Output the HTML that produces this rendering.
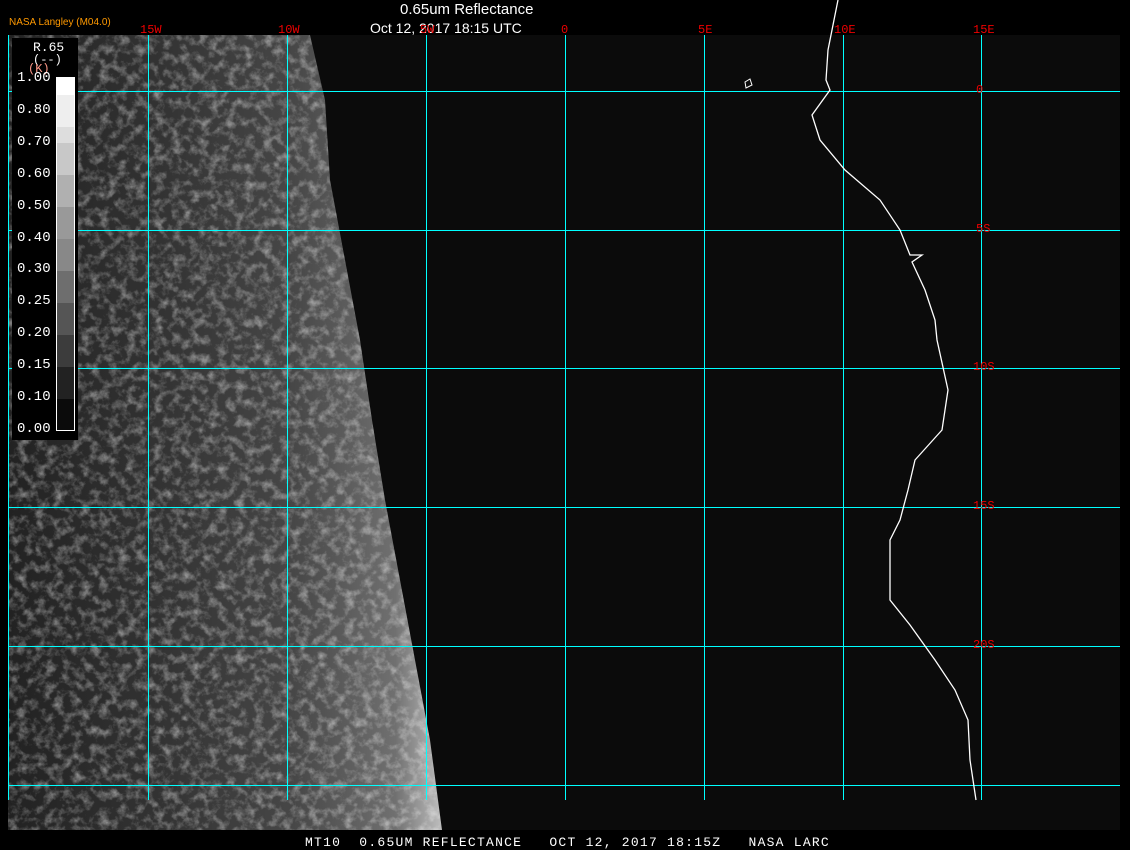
<!DOCTYPE html>
<html><head><style>
body{margin:0;width:1130px;height:850px;background:#000;overflow:hidden;position:relative;font-family:"Liberation Sans",sans-serif}
.t{position:absolute;color:#fff;white-space:nowrap}
.r{position:absolute;color:#e00;font-family:"Liberation Mono",monospace;font-size:12px;white-space:nowrap}
.lg{position:absolute;color:#fff;font-family:"Liberation Mono",monospace;font-size:14px}
</style></head><body>
<svg width="1130" height="850" style="position:absolute;left:0;top:0" shape-rendering="crispEdges">
<defs>
<filter id="n" x="0" y="0" width="100%" height="100%">
<feTurbulence type="fractalNoise" baseFrequency="0.11" numOctaves="4" seed="7"/>
<feColorMatrix type="matrix" values="0 0 0 0 1  0 0 0 0 1  0 0 0 0 1  2.2 0 0 0 -0.95"/>
</filter>
<linearGradient id="g" x1="0" x2="1" y1="0" y2="0">
<stop offset="0" stop-color="#222"/><stop offset="0.35" stop-color="#333"/><stop offset="0.65" stop-color="#474747"/><stop offset="0.88" stop-color="#707070"/><stop offset="1" stop-color="#c8c8c8"/>
</linearGradient>
<clipPath id="c"><polygon points="8,35 310,35 325,100 330,180 345,260 360,340 372,420 385,500 400,580 415,660 430,740 442,830 8,830"/></clipPath>
</defs>
<rect x="8" y="35" width="1112" height="795" fill="#0b0b0b"/>
<g clip-path="url(#c)">
<rect x="8" y="35" width="440" height="795" fill="url(#g)"/>
<rect x="8" y="35" width="440" height="795" filter="url(#n)" opacity="0.45"/>
</g>
<g stroke="#0ff" stroke-width="1">
<line x1="8.5" y1="35" x2="8.5" y2="800"/><line x1="148.5" y1="35" x2="148.5" y2="800"/><line x1="287.5" y1="35" x2="287.5" y2="800"/><line x1="426.5" y1="35" x2="426.5" y2="800"/><line x1="565.5" y1="35" x2="565.5" y2="800"/><line x1="704.5" y1="35" x2="704.5" y2="800"/><line x1="843.5" y1="35" x2="843.5" y2="800"/><line x1="981.5" y1="35" x2="981.5" y2="800"/>
<line x1="8" y1="91.5" x2="1120" y2="91.5"/><line x1="8" y1="230.5" x2="1120" y2="230.5"/><line x1="8" y1="368.5" x2="1120" y2="368.5"/><line x1="8" y1="507.5" x2="1120" y2="507.5"/><line x1="8" y1="646.5" x2="1120" y2="646.5"/><line x1="8" y1="785.5" x2="1120" y2="785.5"/>
</g>
<g shape-rendering="auto">
<polyline fill="none" stroke="#fff" stroke-width="1.3" points="838,0 828,50 826,80 830,90 812,115 820,140 845,170 880,200 900,230 910,255 922,255 912,262 925,290 935,320 937,340 948,390 942,430 915,460 908,490 900,520 890,540 890,600 910,625 935,660 955,690 968,720 970,760 976,800"/>
<polygon fill="none" stroke="#fff" points="745,82 750,79 752,85 746,88"/>
</g>
<rect x="12" y="38" width="66" height="402" fill="#000"/>
<rect x="56" y="77" width="18" height="18" fill="#fff"/><rect x="56" y="95" width="18" height="32" fill="#eee"/>
<rect x="56" y="127" width="18" height="16" fill="#ddd"/><rect x="56" y="143" width="18" height="32" fill="#c8c8c8"/>
<rect x="56" y="175" width="18" height="32" fill="#b0b0b0"/><rect x="56" y="207" width="18" height="32" fill="#999"/>
<rect x="56" y="239" width="18" height="32" fill="#888"/><rect x="56" y="271" width="18" height="32" fill="#6e6e6e"/>
<rect x="56" y="303" width="18" height="32" fill="#555"/><rect x="56" y="335" width="18" height="32" fill="#3c3c3c"/>
<rect x="56" y="367" width="18" height="32" fill="#222"/><rect x="56" y="399" width="18" height="31" fill="#0b0b0b"/>
<rect x="56.5" y="77.5" width="18" height="353" fill="none" stroke="#fff"/>
</svg>
<div class="t" style="left:9px;top:17px;font-size:10px;color:#f90">NASA Langley (M04.0)</div>
<div class="t" style="left:400px;top:1px;font-size:15px">0.65um Reflectance</div>
<div class="t" style="left:370px;top:20px;font-size:14px">Oct 12, 2017 18:15 UTC</div>
<div class="r" style="left:140px;top:23px">15W</div><div class="r" style="left:278px;top:23px">10W</div>
<div class="r" style="left:420px;top:23px">5W</div><div class="r" style="left:561px;top:23px">0</div>
<div class="r" style="left:698px;top:23px">5E</div><div class="r" style="left:834px;top:23px">10E</div><div class="r" style="left:973px;top:23px">15E</div>
<div class="r" style="left:976px;top:83px">0</div><div class="r" style="left:976px;top:222px">5S</div>
<div class="r" style="left:973px;top:360px">10S</div><div class="r" style="left:973px;top:499px">15S</div><div class="r" style="left:973px;top:638px">20S</div>
<div class="lg" style="left:33px;top:40px;font-size:13px">R.65</div>
<div class="lg" style="left:33px;top:53px;font-size:12px">(--)</div>
<div class="lg" style="left:28px;top:62px;font-size:12px;color:#f98">(K)</div>
<div class="lg" style="left:17px;top:63px;line-height:31.9px">1.00<br>0.80<br>0.70<br>0.60<br>0.50<br>0.40<br>0.30<br>0.25<br>0.20<br>0.15<br>0.10<br>0.00</div>
<div class="t" style="left:305px;top:835px;font-family:'Liberation Mono',monospace;font-size:13px;letter-spacing:1.25px;white-space:pre">MT10  0.65UM REFLECTANCE   OCT 12, 2017 18:15Z   NASA LARC</div>
</body></html>
